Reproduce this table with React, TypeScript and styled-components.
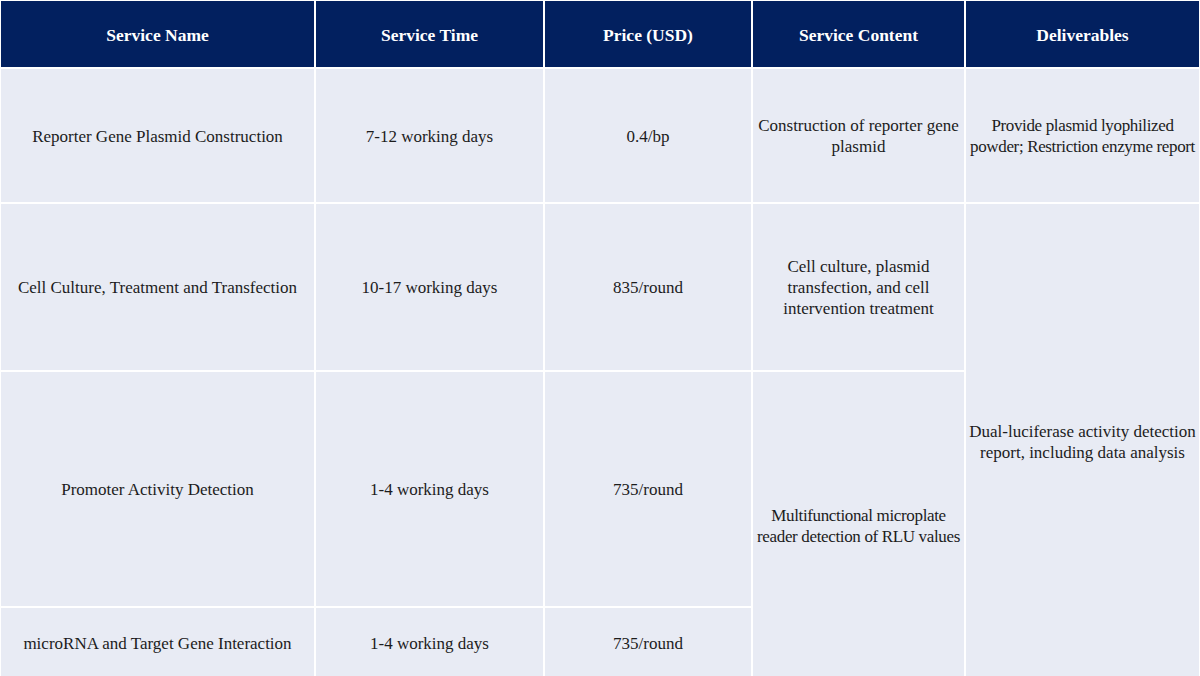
import React from 'react'
import styled, { createGlobalStyle } from 'styled-components'

const GlobalStyle = createGlobalStyle`
    html, body {
        margin: 0;
        padding: 0;
        background: #ffffff;
        overflow: hidden;
    }
`;

const Grid = styled.div`
    width: 1200px;
    box-sizing: border-box;
    padding: 1px;
    display: grid;
    grid-template-columns: 313px 227px 206px 211px 1fr;
    grid-template-rows: 66px 133px 166px 234px 70px;
    gap: 2px;
    background: #ffffff;
    font-family: "Liberation Serif", "DejaVu Serif", serif;
`;

const HeadCell = styled.div`
    background: #02205f;
    color: #ffffff;
    font-weight: bold;
    font-size: 17.5px;
    display: flex;
    align-items: center;
    justify-content: center;
    text-align: center;
    padding-top: 3px;
`;

interface ICellProps {
    $col: number;
    $row: number;
    $span?: number;
    $tight?: boolean;
}

const Cell = styled.div<ICellProps>`
    grid-column: ${p => p.$col};
    grid-row: ${p => p.$row} / span ${p => p.$span || 1};
    background: #e8ebf4;
    color: #1c1c1c;
    font-size: 17px;
    line-height: 21px;
    letter-spacing: ${p => p.$tight ? '-0.35px' : '0'};
    white-space: ${p => p.$tight ? 'nowrap' : 'normal'};
    display: flex;
    align-items: center;
    justify-content: center;
    text-align: center;
    padding: 1px 2px 0;
`;

const headers = ['Service Name', 'Service Time', 'Price (USD)', 'Service Content', 'Deliverables']

const rows = [
    ['Reporter Gene Plasmid Construction', '7-12 working days', '0.4/bp'],
    ['Cell Culture, Treatment and Transfection', '10-17 working days', '835/round'],
    ['Promoter Activity Detection', '1-4 working days', '735/round'],
    ['microRNA and Target Gene Interaction', '1-4 working days', '735/round'],
]

export default function App() {
    return (
        <>
            <GlobalStyle />
            <Grid>
                {headers.map(h => <HeadCell key={h}>{h}</HeadCell>)}
                {rows.map((r, i) => r.map((v, j) => (
                    <Cell key={i + '-' + j} $col={j + 1} $row={i + 2}>{v}</Cell>
                )))}
                <Cell $col={4} $row={2}>Construction of reporter gene<br />plasmid</Cell>
                <Cell $col={4} $row={3}>Cell culture, plasmid<br />transfection, and cell<br />intervention treatment</Cell>
                <Cell $col={4} $row={4} $span={2} $tight>Multifunctional microplate<br />reader detection of RLU values</Cell>
                <Cell $col={5} $row={2} $tight>Provide plasmid lyophilized<br />powder; Restriction enzyme report</Cell>
                <Cell $col={5} $row={3} $span={3}>Dual-luciferase activity detection<br />report, including data analysis</Cell>
            </Grid>
        </>
    )
}
